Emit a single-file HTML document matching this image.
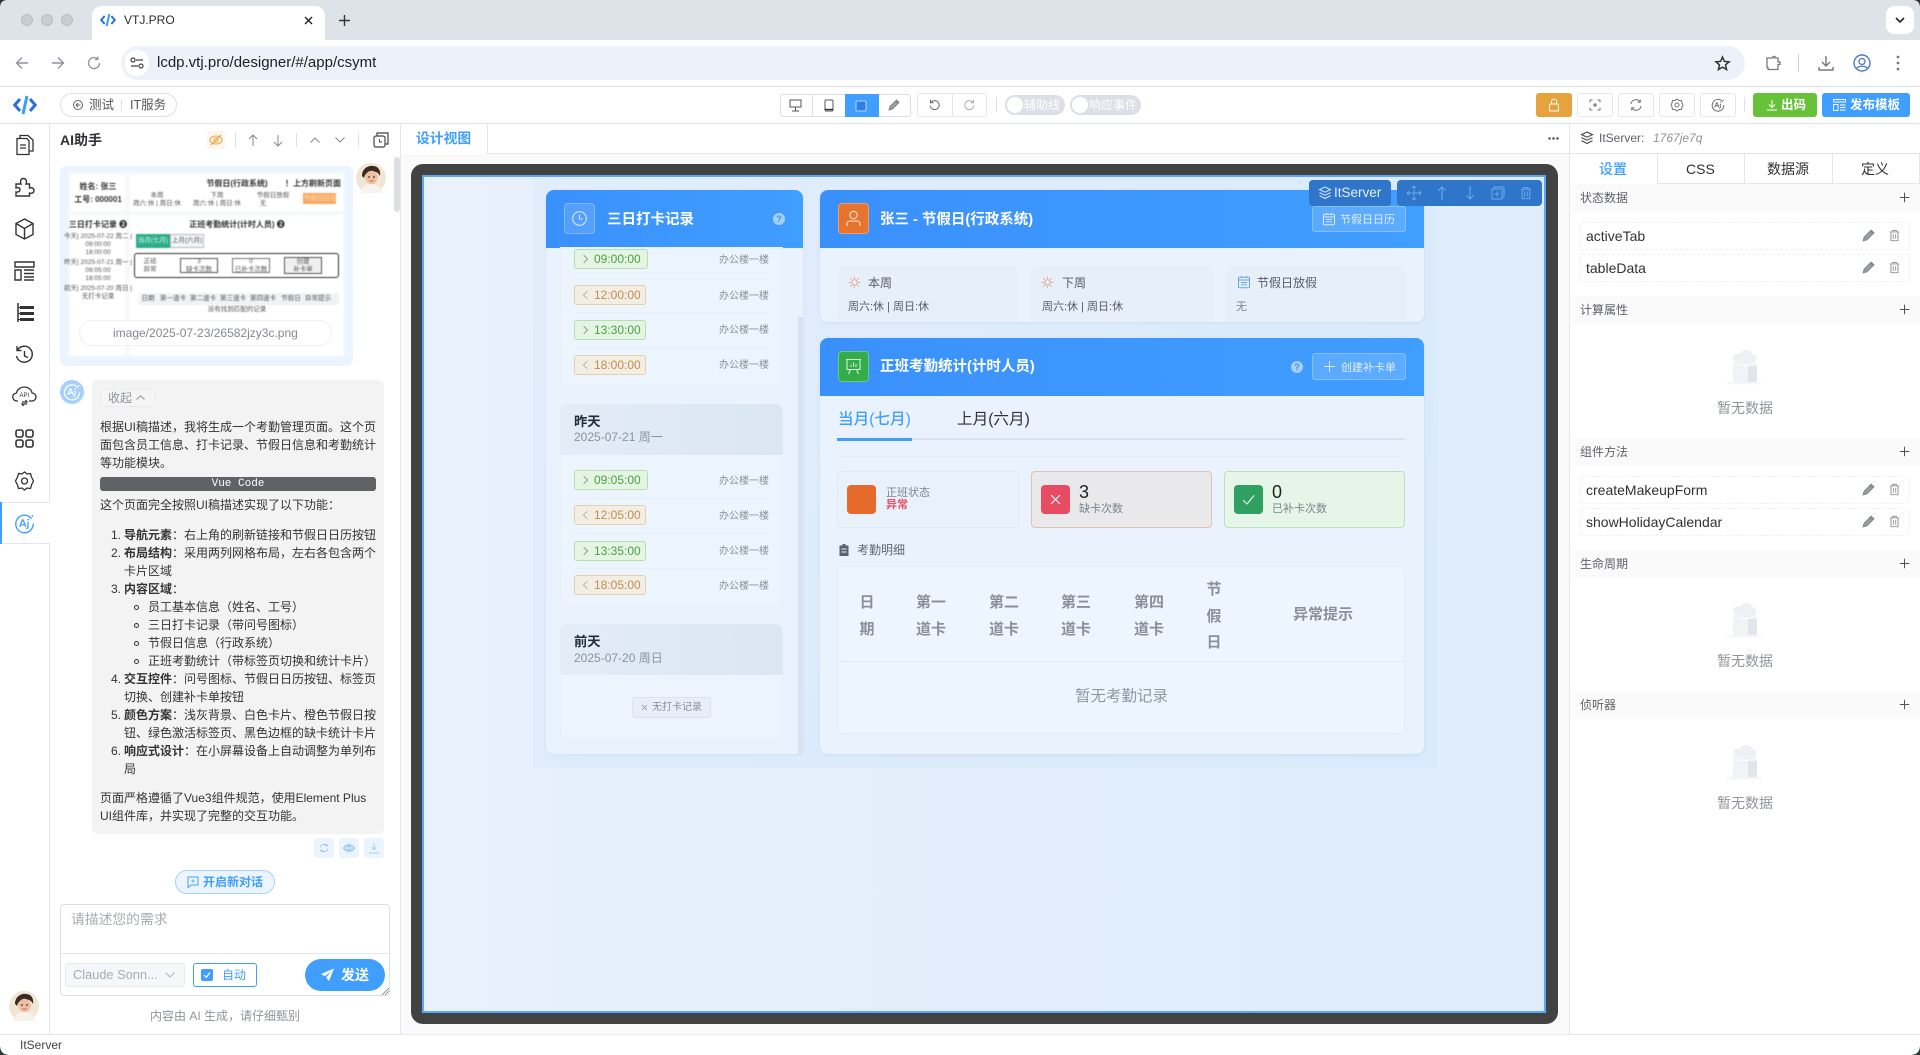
<!DOCTYPE html>
<html lang="zh"><head><meta charset="utf-8"><title>VTJ.PRO</title>
<style>
*{box-sizing:border-box}
html,body{margin:0;padding:0;width:1920px;height:1055px;overflow:hidden;background:#fff;font-family:"Liberation Sans","Noto Sans CJK SC",sans-serif;color:#303133}
.a{position:absolute}
.t{position:absolute;white-space:nowrap}
svg{position:absolute;overflow:visible}
.hdr{position:absolute;height:58px;background:linear-gradient(90deg,#3a90fb,#409eff);border-radius:8px 8px 0 0}
.ib{position:absolute;width:31px;height:31px;border-radius:4px;border:1px solid rgba(255,255,255,.25)}
.ht{position:absolute;white-space:nowrap;color:#fff;font-weight:700;font-size:14.5px;line-height:20px}
.gb{position:absolute;background:#fff;border:1px solid #e4e7ed;border-radius:3px;width:36px;height:24px;top:93px}
.tag{position:absolute;left:574px;height:20px;border-radius:3px;font-size:12px;line-height:18px;padding-left:19px;width:72px}
.tag::before{content:"";position:absolute;left:8px;top:6px;width:5px;height:5px;transform:rotate(45deg)}
.g{background:#e4f5e4;border:1px solid #b5e0ae;color:#4da044}
.g::before{border-top:1px solid #8aa08c;border-right:1px solid #8aa08c;left:6px}
.o{background:#f2eee4;border:1px solid #e5d0ab;color:#c48c50}
.o::before{border-left:1px solid #c9b69a;border-bottom:1px solid #c9b69a;left:9px}
.loc{position:absolute;left:719px;font-size:10px;line-height:14px;color:#87909b;white-space:nowrap;margin-top:2px}
.dv{position:absolute;left:574px;width:195px;height:1px;background:#e5eef9}
.day{position:absolute;left:560px;width:223px;background:#ecf4fe;border:1px solid #e6effa;border-radius:8px}
.dh{position:absolute;left:560px;width:223px;height:51px;background:linear-gradient(90deg,#e3ecf7,#dbe6f3);border-radius:8px 8px 0 0}
.sm{position:absolute;top:266px;height:56px;background:#e7eff9;border:1px solid #e4edf8;border-bottom:0;border-radius:6px 6px 0 0}
.st{position:absolute;top:471px;height:57px;border-radius:4px}
.th{position:absolute;font-size:15px;font-weight:700;color:#8a9099;line-height:26.5px;text-align:center;white-space:nowrap;margin-top:2px}
.sh{position:absolute;left:1573px;width:347px;height:28px;background:#fafafa}
.sl{position:absolute;left:1580px;font-size:12px;line-height:18px;color:#606266;white-space:nowrap}
.it{position:absolute;left:1580px;width:330px;height:28px;border:1px dashed #f0f0f0;border-radius:2px;font-size:14px;line-height:26px;padding-left:5px;color:#303133}
.em{position:absolute;left:1695px;width:100px;text-align:center;font-size:14px;line-height:20px;color:#909399}
.m{position:absolute;white-space:nowrap;transform:translateX(-50%);font-size:6.5px;line-height:8px;color:#555}
.mb{font-weight:700;font-size:8px;line-height:10px;color:#333}
</style></head>
<body>
<svg width="0" height="0" style="position:absolute">
<defs>
<symbol id="pen" viewBox="0 0 14 14"><path d="M2 12 L3 8.5 L9.5 2 L12 4.5 L5.5 11 Z M8.5 3 L11 5.5" fill="#9a9ea5" stroke="#7c7f85" stroke-width=".9"/></symbol>
<symbol id="bin" viewBox="0 0 14 14"><path d="M2 3.2H12M5 3V1.5H9V3M3.2 3.2V12.6H10.8V3.2M5.7 5.5V10.5M8.3 5.5V10.5" fill="none" stroke="#8d9096" stroke-width="1"/></symbol>
<symbol id="plus" viewBox="0 0 14 14"><path d="M7 1V13M1 7H13" fill="none" stroke="#555" stroke-width="1.3"/></symbol>
<symbol id="sun" viewBox="0 0 14 14"><circle cx="7" cy="7" r="3" fill="none" stroke="#e59a85" stroke-width="1"/><path d="M7 .8V2.6M7 11.4V13.2M.8 7H2.6M11.4 7H13.2M2.6 2.6L3.9 3.9M10.1 10.1L11.4 11.4M11.4 2.6L10.1 3.9M3.9 10.1L2.6 11.4" stroke="#e59a85" stroke-width="1"/></symbol>
<symbol id="cal" viewBox="0 0 14 14"><rect x="1.5" y="2.2" width="11" height="10.6" rx="1" fill="none" stroke="currentColor" stroke-width="1"/><path d="M1.5 5H12.5M4.5 1V3M9.5 1V3M4 7.5H10M4 9.8H10" stroke="currentColor" stroke-width=".9" fill="none"/></symbol>
<symbol id="empty" viewBox="0 0 40 40"><ellipse cx="20" cy="36" rx="19" ry="1.6" fill="#f6f6f8"/><path d="M10 14 C7 8 13 5 16 7 C18 1 27 2 28 7 C33 7 34 13 30 16 L20 18Z" fill="#eff0f3"/><path d="M8 17 L16 12 L20 17 L12 20Z" fill="#f3f4f7"/><path d="M33 17 L26 13 L24 18 L33 22Z" fill="#f3f4f7"/><rect x="9" y="19" width="15" height="16" fill="#f2f3f6"/><rect x="24" y="19" width="9" height="16" fill="#e3e5ec"/></symbol>
<symbol id="layers" viewBox="0 0 14 14"><path d="M7 1L12.5 3.6L7 6.2L1.5 3.6ZM1.5 6.6L7 9.2L12.5 6.6M1.5 9.6L7 12.5L12.5 9.6" fill="none" stroke="currentColor" stroke-width="1.1"/></symbol>
<symbol id="rf" viewBox="0 0 14 14"><path d="M2 6A5 5 0 0 1 11 3.8M12 8A5 5 0 0 1 3 10.2M11.3 1.5V4.2H8.6M2.7 12.5V9.8H5.4" fill="none" stroke="currentColor" stroke-width="1"/></symbol>
<symbol id="code" viewBox="0 0 24 20"><path d="M7 4L1.8 10L7 16M17 4L22.2 10L17 16" fill="none" stroke="#2c6fe0" stroke-width="3"/><path d="M14 1L10 19" stroke="#3aa0f5" stroke-width="3"/></symbol>
<symbol id="ai" viewBox="0 0 24 24"><path d="M20 6.5A10 10 0 1 0 22 12" fill="none" stroke="currentColor" stroke-width="1.6"/><path d="M6.5 16L9.5 8H10.5L13.5 16M7.6 13.4H12.4" fill="none" stroke="currentColor" stroke-width="1.5"/><path d="M16 10V15.5Q16 17.5 14 18" fill="none" stroke="currentColor" stroke-width="1.5"/><circle cx="16.2" cy="7.5" r="1" fill="currentColor"/><circle cx="21" cy="3.5" r="1" fill="currentColor"/></symbol>
<symbol id="face" viewBox="0 0 30 30"><circle cx="15" cy="15" r="15" fill="#efe6d3"/><path d="M6 13C6 5 13 2 17 3C23 3 25 9 24 13C22 9 19 8 15 9C11 9 9 11 8 15Z" fill="#3a2a22"/><ellipse cx="15.5" cy="14.5" rx="6.2" ry="6.8" fill="#f0bfa0"/><path d="M5 30C6 22 11 21 15 21C20 21 25 23 26 30Z" fill="#f7f3ea"/><circle cx="13" cy="14" r=".9" fill="#333"/><circle cx="18" cy="14" r=".9" fill="#333"/><path d="M13.5 17.5Q15.5 19 17.5 17.5" stroke="#b55" fill="none" stroke-width=".8"/></symbol>
</defs></svg>

<!-- browser chrome -->
<div class="a" style="left:0;top:0;width:1920px;height:40px;background:#dee3e8"></div>
<div class="a" style="left:0;top:0;width:6px;height:6px;background:radial-gradient(circle at 100% 100%,transparent 5.5px,#333 6px)"></div>
<div class="a" style="left:1914px;top:0;width:6px;height:6px;background:radial-gradient(circle at 0 100%,transparent 5.5px,#333 6px)"></div>
<div class="a" style="left:21px;top:14px;width:12px;height:12px;border-radius:50%;background:#c9cdd1;border:1px solid #b9bdc1"></div>
<div class="a" style="left:41px;top:14px;width:12px;height:12px;border-radius:50%;background:#c9cdd1;border:1px solid #b9bdc1"></div>
<div class="a" style="left:61px;top:14px;width:12px;height:12px;border-radius:50%;background:#c9cdd1;border:1px solid #b9bdc1"></div>
<div class="a" style="left:92px;top:6px;width:233px;height:34px;background:#fff;border-radius:10px 10px 0 0"></div>
<svg style="left:100px;top:13px" width="16" height="14"><use href="#code" width="16" height="14"/></svg>
<div class="t" style="left:124px;top:11px;font-size:12px;line-height:18px;color:#2a2d30">VTJ.PRO</div>
<svg style="left:304px;top:15.5px" width="9" height="9"><path d="M1 1L8 8M8 1L1 8" stroke="#222" stroke-width="1.4"/></svg>
<svg style="left:339px;top:14.5px" width="11" height="11"><path d="M5.5 0V11M0 5.5H11" stroke="#333" stroke-width="1.4"/></svg>
<div class="a" style="left:1886px;top:6px;width:28px;height:28px;border-radius:8px;background:#fff"></div>
<svg style="left:1895px;top:17px" width="10" height="6"><path d="M1 1L5 5L9 1" fill="none" stroke="#222" stroke-width="1.6"/></svg>

<div class="a" style="left:0;top:40px;width:1920px;height:46px;background:#fff"></div>
<svg style="left:15px;top:56px" width="14" height="14"><path d="M13 7H1.5M7 1.5L1.5 7L7 12.5" fill="none" stroke="#8e9399" stroke-width="1.4"/></svg>
<svg style="left:51px;top:56px" width="14" height="14"><path d="M1 7H12.5M7 1.5L12.5 7L7 12.5" fill="none" stroke="#8e9399" stroke-width="1.4"/></svg>
<svg style="left:87px;top:56px" width="14" height="14"><path d="M12.5 7A5.5 5.5 0 1 1 10.5 2.8M10.8 .5V3.5H7.8" fill="none" stroke="#8e9399" stroke-width="1.3"/></svg>
<div class="a" style="left:121px;top:46px;width:1624px;height:34px;border-radius:17px;background:#edf2fa"></div>
<div class="a" style="left:125px;top:50px;width:24px;height:26px;border-radius:13px;background:#fff"></div>
<svg style="left:130px;top:57px" width="14" height="12"><path d="M6 3H13M1 9H8" stroke="#444" stroke-width="1.3"/><circle cx="3" cy="3" r="2" fill="none" stroke="#444" stroke-width="1.2"/><circle cx="11" cy="9" r="2" fill="none" stroke="#444" stroke-width="1.2"/></svg>
<div class="t" style="left:157px;top:53px;font-size:15px;line-height:20px;color:#202124">lcdp.vtj.pro/designer/#/app/csymt</div>
<svg style="left:1715px;top:56px" width="15" height="15"><path d="M7.5 1L9.4 5.4L14 5.8L10.5 8.9L11.6 13.6L7.5 11.1L3.4 13.6L4.5 8.9L1 5.8L5.6 5.4Z" fill="none" stroke="#333" stroke-width="1.5"/></svg>
<svg style="left:1765px;top:55px" width="16" height="16"><path d="M5 3H8V1.5H10V3H13V7H15V9.5H13V14.5H3V12.5H2V3Z" fill="none" stroke="#75797e" stroke-width="1.3"/></svg>
<div class="a" style="left:1798px;top:54px;width:1px;height:18px;background:#cfd3d8"></div>
<svg style="left:1818px;top:55px" width="16" height="16"><path d="M8 1V10.5M4 7L8 11L12 7M1 12V15H15V12" fill="none" stroke="#75797e" stroke-width="1.4"/></svg>
<svg style="left:1853px;top:54px" width="18" height="18"><circle cx="9" cy="9" r="8" fill="none" stroke="#4f7ac4" stroke-width="1.4"/><circle cx="9" cy="7.5" r="3" fill="none" stroke="#4f7ac4" stroke-width="1.3"/><path d="M3.5 14.5C5 11.5 13 11.5 14.5 14.5" fill="none" stroke="#4f7ac4" stroke-width="1.3"/></svg>
<svg style="left:1896px;top:55px" width="4" height="16"><circle cx="2" cy="2" r="1.4" fill="#75797e"/><circle cx="2" cy="8" r="1.4" fill="#75797e"/><circle cx="2" cy="14" r="1.4" fill="#75797e"/></svg>
<div class="a" style="left:0;top:86px;width:1920px;height:1px;background:#dcdfe3"></div>

<!-- app header -->
<svg style="left:13px;top:95px" width="24" height="20"><use href="#code" width="24" height="20"/></svg>
<div class="a" style="left:60px;top:93px;width:117px;height:24px;border:1px solid #dcdfe6;border-radius:12px"></div>
<svg style="left:73px;top:100px" width="10" height="10"><circle cx="5" cy="5" r="4.5" fill="none" stroke="#666"/><path d="M7.5 5H3M5 3L3 5L5 7" fill="none" stroke="#666" stroke-width=".9"/></svg>
<div class="t" style="left:89px;top:95px;font-size:12.5px;line-height:20px;color:#555">测试</div>
<div class="a" style="left:121px;top:99px;width:1px;height:12px;background:#dcdfe6"></div>
<div class="t" style="left:130px;top:95px;font-size:12.5px;line-height:20px;color:#555">IT服务</div>

<div class="a" style="left:780px;top:94px;width:131px;height:23px;border:1px solid #dcdfe6;border-radius:3px;background:#fff"></div>
<div class="a" style="left:812px;top:94px;width:1px;height:23px;background:#dcdfe6"></div>
<div class="a" style="left:845px;top:94px;width:34px;height:23px;background:#409eff"></div>
<svg style="left:789px;top:99px" width="13" height="13"><path d="M1 1H12V8H1ZM6.5 8V11.5M3 12H10" fill="none" stroke="#555" stroke-width="1"/></svg>
<svg style="left:823.5px;top:99px" width="10" height="13"><rect x="1" y="1" width="8" height="11" rx="1" fill="none" stroke="#555"/><path d="M1 10.5H9" stroke="#333" stroke-width="1.4"/></svg>
<svg style="left:855px;top:100px" width="12" height="12"><rect x="1" y="1" width="10" height="10" rx="1" fill="#2f80e6" stroke="#d5e8ff" stroke-width=".8"/></svg>
<svg style="left:887px;top:98px" width="14" height="14"><use href="#pen" width="14" height="14"/></svg>
<div class="a" style="left:917px;top:93px;width:70px;height:24px;border:1px solid #e4e7ed;border-radius:3px;background:#fff"></div>
<div class="a" style="left:952px;top:93px;width:1px;height:24px;background:#e4e7ed"></div>
<svg style="left:929px;top:99px" width="11" height="12"><path d="M2 3.5A4.5 4.5 0 1 1 1.2 6.5M1.5 .8V3.8H4.5" fill="none" stroke="#666"/></svg>
<svg style="left:964px;top:99px" width="11" height="12"><path d="M9 3.5A4.5 4.5 0 1 0 9.8 6.5M9.5 .8V3.8H6.5" fill="none" stroke="#aaa"/></svg>
<div class="a" style="left:996px;top:97px;width:1px;height:15px;background:#dcdfe6"></div>
<div class="a" style="left:1005px;top:95px;width:60px;height:20px;border-radius:10px;background:#dcdfe6"></div>
<div class="a" style="left:1007px;top:97px;width:16px;height:16px;border-radius:50%;background:#fff"></div>
<div class="t" style="left:1024px;top:95px;font-size:12px;line-height:20px;color:#fff">辅助线</div>
<div class="a" style="left:1070px;top:95px;width:71px;height:20px;border-radius:10px;background:#dcdfe6"></div>
<div class="a" style="left:1072px;top:97px;width:16px;height:16px;border-radius:50%;background:#fff"></div>
<div class="t" style="left:1089px;top:95px;font-size:12px;line-height:20px;color:#fff">响应事件</div>

<div class="a" style="left:1536px;top:93px;width:36px;height:24px;background:#e6a23c;border-radius:3px"></div>
<svg style="left:1548px;top:98px" width="12" height="14"><rect x="1.5" y="6" width="9" height="7" rx="1" fill="none" stroke="#fff"/><path d="M3.5 6V3.5A2.5 2.5 0 0 1 8.5 3.5V6" fill="none" stroke="#fff"/></svg>
<div class="gb" style="left:1577px"></div><div class="gb" style="left:1618px"></div><div class="gb" style="left:1659px"></div><div class="gb" style="left:1700px"></div>
<svg style="left:1589px;top:99px" width="12" height="12"><path d="M1 3.5V1H3.5M8.5 1H11V3.5M11 8.5V11H8.5M3.5 11H1V8.5" fill="none" stroke="#777"/><circle cx="6" cy="6" r="1.8" fill="#888"/></svg>
<svg style="left:1629px;top:98px;color:#777" width="14" height="14"><use href="#rf" width="14" height="14"/></svg>
<svg style="left:1670px;top:98px" width="14" height="14"><circle cx="7" cy="7" r="2" fill="none" stroke="#777"/><path d="M7 1L9 2.5L11.5 2.5L12 5L13 7L12 9L11.5 11.5L9 11.5L7 13L5 11.5L2.5 11.5L2 9L1 7L2 5L2.5 2.5L5 2.5Z" fill="none" stroke="#777"/></svg>
<svg style="left:1711px;top:98px;color:#666" width="14" height="14"><use href="#ai" width="14" height="14"/></svg>
<div class="a" style="left:1744px;top:97px;width:1px;height:15px;background:#dcdfe6"></div>
<div class="a" style="left:1753px;top:93px;width:64px;height:24px;background:#67c23a;border-radius:3px"></div>
<svg style="left:1766px;top:99px" width="12" height="12"><path d="M6 1V8M3 5.5L6 8.5L9 5.5M1 11H11" fill="none" stroke="#fff"/></svg>
<div class="t" style="left:1781px;top:95px;font-size:12.5px;font-weight:700;line-height:20px;color:#fff">出码</div>
<div class="a" style="left:1822px;top:93px;width:88px;height:24px;background:#409eff;border-radius:3px"></div>
<svg style="left:1833px;top:99px" width="13" height="12"><path d="M.5 .5H12.5V3H.5ZM.5 5.5H5V11.5H.5ZM7 6H12.5M7 8.5H12.5M7 11H12.5" fill="none" stroke="#fff" stroke-width=".9"/></svg>
<div class="t" style="left:1850px;top:95px;font-size:12.5px;font-weight:700;line-height:20px;color:#fff">发布模板</div>
<div class="a" style="left:0;top:123px;width:1920px;height:1px;background:#dfe2e6"></div>

<!-- left rail -->
<div class="a" style="left:49px;top:124px;width:1px;height:910px;background:#e4e7ed"></div>
<svg style="left:15px;top:134px" width="20" height="22"><path d="M5 4V1.5H13L18 6V17H14M2 4.5H12L14 7V20.5H2ZM5 11H11M5 14H11" fill="none" stroke="#333" stroke-width="1.3"/></svg>
<svg style="left:14px;top:176px" width="21" height="22"><path d="M2 8H7C6 6 6.5 2.5 9.5 2.5S13 6 12 8H15.5V12C18 11 20 12.5 20 14.5S18 18 15.5 17V20H2V16C4.5 16.5 6 15 6 13.5S4.5 11 2 12Z" fill="none" stroke="#333" stroke-width="1.4"/></svg>
<svg style="left:15px;top:218px" width="19" height="22"><path d="M9.5 1L18 5.5V16.5L9.5 21L1 16.5V5.5ZM1 5.5L9.5 10.5L18 5.5M9.5 10.5V21" fill="none" stroke="#333" stroke-width="1.4"/></svg>
<svg style="left:14px;top:261px" width="21" height="20"><path d="M1 1H20V6H1ZM1 9H7V19H1ZM10 9H20M10 12.5H20M10 16H20M10 19H20" fill="none" stroke="#333" stroke-width="1.4"/></svg>
<svg style="left:16px;top:303px" width="18" height="20"><path d="M2 0V19" stroke="#333" stroke-width="1.5"/><rect x="4" y="3" width="14" height="3" fill="#333"/><rect x="4" y="9" width="14" height="3" fill="#333"/><rect x="4" y="15" width="14" height="3" fill="#333"/><path d="M2 4.5H4M2 10.5H4M2 16.5H4" stroke="#333"/></svg>
<svg style="left:15px;top:345px" width="19" height="20"><path d="M2.5 5A8 8 0 1 1 1.5 11M2 1V5.5H6.5M9.5 6V11L13 12.5" fill="none" stroke="#333" stroke-width="1.4"/></svg>
<svg style="left:12px;top:386px" width="25" height="22"><path d="M6 15H5A4 4 0 0 1 4.5 7C5.5 2.5 9.5 1 12.5 1S19.5 3 20 7A4 4 0 0 1 20 15H17M10 16H15L13.5 14M15 18H10L11.5 20" fill="none" stroke="#333" stroke-width="1.3"/><text x="7.5" y="11" font-size="6" fill="#333" font-family="Liberation Sans">API</text></svg>
<svg style="left:15px;top:429px" width="19" height="19"><rect x="1" y="1" width="7" height="7" rx="2" fill="none" stroke="#333" stroke-width="1.6"/><rect x="11" y="1" width="7" height="7" rx="2" fill="none" stroke="#333" stroke-width="1.6"/><rect x="1" y="11" width="7" height="7" rx="2" fill="none" stroke="#333" stroke-width="1.6"/><rect x="11" y="11" width="7" height="7" rx="2" fill="none" stroke="#333" stroke-width="1.6"/></svg>
<svg style="left:15px;top:471px" width="19" height="20"><circle cx="9.5" cy="10" r="3" fill="none" stroke="#333" stroke-width="1.3"/><path d="M9.5 1L12 3L15.5 2.5L16.5 6L18.5 10L16.5 14L15.5 17.5L12 17L9.5 19L7 17L3.5 17.5L2.5 14L.5 10L2.5 6L3.5 2.5L7 3Z" fill="none" stroke="#333" stroke-width="1.3"/></svg>
<div class="a" style="left:0;top:502px;width:50px;height:42px;background:#fff;border-top:1px solid #e4e7ed;border-bottom:1px solid #e4e7ed"></div>
<div class="a" style="left:0;top:502px;width:2px;height:42px;background:#409eff"></div>
<svg style="left:14px;top:513px;color:#409eff" width="21" height="21"><use href="#ai" width="21" height="21"/></svg>
<svg style="left:9px;top:991px" width="30" height="30"><use href="#face" width="30" height="30"/></svg>

<!-- AI panel -->
<div class="a" style="left:400px;top:124px;width:1px;height:910px;background:#e4e7ed"></div>
<div class="t" style="left:60px;top:130px;font-size:14px;font-weight:700;line-height:20px;color:#303133">AI助手</div>
<div class="a" style="left:207px;top:131px;width:18px;height:18px;background:#fdf6ec;border-radius:2px"></div>
<svg style="left:209px;top:134px" width="14" height="12"><ellipse cx="7" cy="6" rx="6" ry="4" fill="none" stroke="#e6a23c"/><circle cx="7" cy="6" r="2" fill="none" stroke="#e6a23c"/><path d="M2 11L12 1" stroke="#e6a23c"/></svg>
<div class="a" style="left:235px;top:133px;width:1px;height:14px;background:#dcdfe6"></div>
<svg style="left:248px;top:134px" width="10" height="12"><path d="M5 12V1M1 5L5 1L9 5" fill="none" stroke="#888"/></svg>
<svg style="left:273px;top:135px" width="10" height="12"><path d="M5 0V11M1 7L5 11L9 7" fill="none" stroke="#888"/></svg>
<div class="a" style="left:296px;top:133px;width:1px;height:14px;background:#dcdfe6"></div>
<svg style="left:310px;top:137px" width="10" height="6"><path d="M.5 5.5L5 1L9.5 5.5" fill="none" stroke="#888"/></svg>
<svg style="left:335px;top:137px" width="10" height="6"><path d="M.5 .5L5 5L9.5 .5" fill="none" stroke="#888"/></svg>
<div class="a" style="left:358px;top:133px;width:1px;height:14px;background:#dcdfe6"></div>
<svg style="left:373px;top:132px" width="16" height="16"><path d="M4 4V1H15V12H12" fill="none" stroke="#444" stroke-width="1.2"/><rect x="1" y="4" width="11" height="11" rx="2" fill="#fff" stroke="#444" stroke-width="1.2"/><path d="M6.5 7V10H9" fill="none" stroke="#444"/></svg>
<div class="a" style="left:394px;top:157px;width:6px;height:55px;background:#dedfe2;border-radius:3px"></div>

<div class="a" style="left:60px;top:166px;width:293px;height:200px;background:#ecf5ff;border-radius:6px"></div>
<div class="a" style="left:0;top:0;width:400px;height:360px;filter:blur(.45px)">
<div class="a" style="left:68px;top:172px;width:277px;height:185px;background:#f7f8fa"></div>
<div class="a" style="left:70px;top:175px;width:55px;height:36px;background:#fff"></div>
<div class="a" style="left:130px;top:175px;width:213px;height:36px;background:#fff"></div>
<div class="a" style="left:70px;top:215px;width:55px;height:140px;background:#fff"></div>
<div class="a" style="left:130px;top:215px;width:213px;height:140px;background:#fff"></div>
<div class="m mb" style="left:98px;top:182px">姓名: 张三</div>
<div class="m mb" style="left:98px;top:195px">工号: 000001</div>
<div class="m mb" style="left:237px;top:179px">节假日(行政系统)</div>
<div class="m mb" style="left:313px;top:179px">！上方刷新页面</div>
<div class="m" style="left:157px;top:192px">本周</div><div class="m" style="left:157px;top:200px">周六:休 | 周日:休</div>
<div class="m" style="left:217px;top:192px">下周</div><div class="m" style="left:217px;top:200px">周六:休 | 周日:休</div>
<div class="m" style="left:273px;top:192px">节假日放假</div><div class="m" style="left:263px;top:200px">无</div>
<div class="a" style="left:303px;top:193px;width:33px;height:11px;background:#f9a85f"></div>
<div class="m" style="left:320px;top:195px;color:#ffe2c2">节假日日历</div>
<div class="m mb" style="left:98px;top:220px">三日打卡记录 ❷</div>
<div class="m" style="left:98px;top:233px">今天| 2025-07-22 周二 |</div><div class="m" style="left:98px;top:241px">09:00:00</div><div class="m" style="left:98px;top:249px">18:00:00</div>
<div class="m" style="left:98px;top:259px">昨天| 2025-07-21 周一 |</div><div class="m" style="left:98px;top:267px">09:05:00</div><div class="m" style="left:98px;top:275px">18:05:00</div>
<div class="m" style="left:98px;top:285px">前天| 2025-07-20 周日 |</div><div class="m" style="left:98px;top:293px">无打卡记录</div>
<div class="m mb" style="left:237px;top:220px">正班考勤统计(计时人员) ❷</div>
<div class="a" style="left:136px;top:234px;width:34px;height:14px;background:#30ad87"></div>
<div class="a" style="left:170px;top:234px;width:34px;height:14px;border:1px solid #bbb;background:#f2f5f8"></div>
<div class="m" style="left:153px;top:237px;color:#cff">当月(七月)</div><div class="m" style="left:187px;top:237px">上月(六月)</div>
<div class="a" style="left:134px;top:253px;width:205px;height:25px;border:1px solid #333;border-radius:3px"></div>
<div class="m" style="left:150px;top:258px">正班</div><div class="m" style="left:150px;top:266px">异常</div>
<div class="a" style="left:180px;top:258px;width:38px;height:15px;border:1px solid #555"></div><div class="m" style="left:199px;top:258px">3</div><div class="m" style="left:199px;top:266px">缺卡次数</div>
<div class="a" style="left:232px;top:258px;width:38px;height:15px;border:1px solid #777"></div><div class="m" style="left:251px;top:258px">0</div><div class="m" style="left:251px;top:266px">已补卡次数</div>
<div class="a" style="left:284px;top:257px;width:38px;height:17px;border:1px solid #555;background:#f0f0f0"></div><div class="m" style="left:303px;top:258px">创建</div><div class="m" style="left:303px;top:266px">补卡单</div>
<div class="a" style="left:139px;top:293px;width:200px;height:12px;background:#f1f2f4"></div>
<div class="m" style="left:148px;top:295px">日期</div><div class="m" style="left:173px;top:295px">第一道卡</div><div class="m" style="left:203px;top:295px">第二道卡</div><div class="m" style="left:233px;top:295px">第三道卡</div><div class="m" style="left:263px;top:295px">第四道卡</div><div class="m" style="left:291px;top:295px">节假日</div><div class="m" style="left:318px;top:295px">异常提示</div>
<div class="m" style="left:237px;top:306px">没有找到匹配的记录</div>
</div>
<div class="a" style="left:79px;top:320px;width:253px;height:26px;background:rgba(255,255,255,.9);border:1px solid #eef0f4;border-radius:13px"></div>
<div class="t" style="left:113px;top:324px;font-size:12px;line-height:18px;color:#858890">image/2025-07-23/26582jzy3c.png</div>
<svg style="left:356px;top:163px" width="30" height="30"><use href="#face" width="30" height="30"/></svg>

<svg style="left:60px;top:380px;color:#fff" width="24" height="24"><circle cx="12" cy="12" r="12" fill="#a5d0f8"/><use href="#ai" x="3" y="3" width="18" height="18"/></svg>
<div class="a" style="left:92px;top:380px;width:292px;height:454px;background:#f3f3f4;border-radius:6px"></div>
<div class="a" style="left:100px;top:389px;width:55px;height:18px;border:1px solid #ebecef;border-radius:3px;background:#f5f5f6"></div>
<div class="t" style="left:108px;top:389px;font-size:12px;line-height:18px;color:#8f9297">收起</div>
<svg style="left:136px;top:395px" width="9" height="5"><path d="M.5 4.5L4.5 .8L8.5 4.5" fill="none" stroke="#8f9297"/></svg>
<div class="t" style="left:100px;top:418px;font-size:12px;line-height:18px;color:#333">根据UI稿描述，我将生成一个考勤管理页面。这个页<br>面包含员工信息、打卡记录、节假日信息和考勤统计<br>等功能模块。</div>
<div class="a" style="left:100px;top:477px;width:276px;height:14px;background:#616266;border-radius:3px;color:#fff;font:11px/14px 'Liberation Mono',monospace;text-align:center">Vue Code</div>
<div class="t" style="left:100px;top:496px;font-size:12px;line-height:18px;color:#333">这个页面完全按照UI稿描述实现了以下功能：</div>
<div class="t" style="left:111px;top:526px;font-size:12px;line-height:18px;color:#333">1.<br>2.<br><br>3.<br><br><br><br><br>4.<br><br>5.<br><br>6.</div>
<div class="t" style="left:124px;top:526px;font-size:12px;line-height:18px;color:#333"><b>导航元素</b>：右上角的刷新链接和节假日日历按钮<br><b>布局结构</b>：采用两列网格布局，左右各包含两个<br>卡片区域<br><b>内容区域</b>：<br>&nbsp;<br>&nbsp;<br>&nbsp;<br>&nbsp;<br><b>交互控件</b>：问号图标、节假日日历按钮、标签页<br>切换、创建补卡单按钮<br><b>颜色方案</b>：浅灰背景、白色卡片、橙色节假日按<br>钮、绿色激活标签页、黑色边框的缺卡统计卡片<br><b>响应式设计</b>：在小屏幕设备上自动调整为单列布<br>局</div>
<div class="t" style="left:148px;top:598px;font-size:12px;line-height:18px;color:#333">员工基本信息（姓名、工号）<br>三日打卡记录（带问号图标）<br>节假日信息（行政系统）<br>正班考勤统计（带标签页切换和统计卡片）</div>
<div class="a" style="left:134px;top:605px;width:5px;height:5px;border:1px solid #333;border-radius:50%"></div>
<div class="a" style="left:134px;top:623px;width:5px;height:5px;border:1px solid #333;border-radius:50%"></div>
<div class="a" style="left:134px;top:641px;width:5px;height:5px;border:1px solid #333;border-radius:50%"></div>
<div class="a" style="left:134px;top:659px;width:5px;height:5px;border:1px solid #333;border-radius:50%"></div>
<div class="t" style="left:100px;top:789px;font-size:12px;line-height:18px;color:#333">页面严格遵循了Vue3组件规范，使用Element Plus<br>UI组件库，并实现了完整的交互功能。</div>
<div class="a" style="left:314px;top:838px;width:20px;height:20px;background:#ecf5ff;border-radius:3px"></div>
<div class="a" style="left:339px;top:838px;width:20px;height:20px;background:#ecf5ff;border-radius:3px"></div>
<div class="a" style="left:364px;top:838px;width:20px;height:20px;background:#ecf5ff;border-radius:3px"></div>
<svg style="left:319px;top:843px;color:#7fb8f2" width="10" height="10"><use href="#rf" width="10" height="10"/></svg>
<svg style="left:343px;top:844px" width="12" height="8"><path d="M.5 4Q6-2.5 11.5 4Q6 10.5 .5 4Z" fill="none" stroke="#7fb8f2"/><circle cx="6" cy="4" r="1.8" fill="none" stroke="#7fb8f2"/></svg>
<svg style="left:369px;top:843px" width="10" height="11"><path d="M5 0V6M2.5 4L5 6.5L7.5 4M0 10H10" fill="none" stroke="#a8cff5"/></svg>
<div class="a" style="left:175px;top:870px;width:100px;height:24px;border:1px solid #a9d2fb;border-radius:12px;background:#ecf5ff"></div>
<svg style="left:187px;top:876px" width="12" height="12"><path d="M1 1H11V9H4L1 11.5Z" fill="none" stroke="#409eff"/><path d="M6 3.2V6.8M4.2 5H7.8" stroke="#409eff" stroke-width=".8"/></svg>
<div class="t" style="left:203px;top:873px;font-size:12px;font-weight:700;line-height:18px;color:#409eff">开启新对话</div>
<div class="a" style="left:60px;top:904px;width:330px;height:92px;background:#fff;border:1px solid #dcdfe6;border-radius:4px"></div>
<div class="a" style="left:61px;top:953px;width:328px;height:1px;background:#e4e7ed"></div>
<div class="t" style="left:71px;top:910px;font-size:13.8px;line-height:20px;color:#a8abb2">请描述您的需求</div>
<div class="a" style="left:65px;top:963px;width:120px;height:24px;background:#f5f7fa;border:1px solid #e9ebf0;border-radius:3px"></div>
<div class="t" style="left:73px;top:965px;font-size:12.8px;line-height:20px;color:#a8abb2">Claude Sonn...</div>
<svg style="left:165px;top:972px" width="10" height="6"><path d="M.5 .5L5 5L9.5 .5" fill="none" stroke="#b2b5bb"/></svg>
<div class="a" style="left:193px;top:963px;width:64px;height:24px;border:1px solid #409eff;border-radius:3px;background:#fff"></div>
<div class="a" style="left:201px;top:969px;width:12px;height:12px;background:#409eff;border-radius:2px"></div>
<svg style="left:203px;top:971px" width="8" height="8"><path d="M1 4L3.3 6.3L7 1.5" fill="none" stroke="#fff" stroke-width="1.2"/></svg>
<div class="t" style="left:222px;top:965px;font-size:12px;line-height:20px;color:#409eff">自动</div>
<div class="a" style="left:305px;top:959px;width:80px;height:32px;background:#409eff;border-radius:16px"></div>
<svg style="left:321px;top:968px" width="13" height="13"><path d="M13 .5L0 6L3.8 8.3L10 3.5L5.2 9.5L8 13Z" fill="#fff"/></svg>
<div class="t" style="left:341px;top:965px;font-size:14px;font-weight:700;line-height:20px;color:#fff">发送</div>
<svg style="left:381px;top:987px" width="9" height="9"><path d="M1 8L8 1M4 8L8 4" stroke="#777" stroke-width=".8"/></svg>
<div class="t" style="left:150px;top:1007px;font-size:12px;line-height:18px;color:#909399">内容由 AI 生成，请仔细甄别</div>

<!-- center -->
<div class="a" style="left:401px;top:124px;width:1168px;height:30px;background:#fff;border-bottom:1px solid #e4e7ed"></div>
<div class="a" style="left:401px;top:124px;width:87px;height:30px;background:#fff;border-right:1px solid #e4e7ed"></div>
<div class="t" style="left:416px;top:129px;font-size:13.8px;font-weight:700;line-height:20px;color:#409eff">设计视图</div>
<svg style="left:1548px;top:137px" width="11" height="3"><circle cx="1.5" cy="1.5" r="1.2" fill="#444"/><circle cx="5.5" cy="1.5" r="1.2" fill="#444"/><circle cx="9.5" cy="1.5" r="1.2" fill="#444"/></svg>
<div class="a" style="left:401px;top:154px;width:1168px;height:880px;background:#fafafa"></div>
<div class="a" style="left:411px;top:164px;width:1147px;height:860px;background:#424242;border-radius:12px"></div>
<div class="a" style="left:422px;top:175px;width:1124px;height:838px;background:linear-gradient(90deg,#e8f1fc,#e2eefb 50%,#dfedfb);border:2px solid #5aa7f5"></div>
<div class="a" style="left:533px;top:178px;width:905px;height:590px;background:linear-gradient(135deg,#e1edfb,#d8eafb)"></div>

<!-- left card -->
<div class="a" style="left:546px;top:190px;width:257px;height:564px;background:#eaf3fd;border-radius:8px;box-shadow:0 1px 3px rgba(60,110,170,.08)"></div>
<div class="a" style="left:798px;top:317px;width:5px;height:437px;background:#d7e3f1"></div>
<div class="hdr" style="left:546px;top:190px;width:257px"></div>
<div class="ib" style="left:564px;top:203px;background:rgba(255,255,255,.13)"></div>
<svg style="left:572px;top:211px" width="15" height="15"><circle cx="7.5" cy="7.5" r="6.8" fill="none" stroke="#cfe5ff" stroke-width="1.1"/><path d="M7.5 3.5V8H11" fill="none" stroke="#cfe5ff" stroke-width="1.1"/></svg>
<div class="ht" style="left:607px;top:210px">三日打卡记录</div>
<div class="a" style="left:773px;top:213px;width:12px;height:12px;border-radius:50%;background:#a3d0fd;color:#3f8fe8;font-size:9px;font-weight:700;line-height:12px;text-align:center">?</div>

<div class="a" style="left:560px;top:247px;width:223px;height:138px;background:#ecf4fe;border:1px solid #e6effa;border-top:0;border-radius:0 0 8px 8px"></div>
<div class="dv" style="top:278px"></div><div class="dv" style="top:312px"></div><div class="dv" style="top:347px"></div>
<div class="tag g" style="top:249px;width:74px">09:00:00</div>
<div class="tag o" style="top:285px">12:00:00</div>
<div class="tag g" style="top:320px">13:30:00</div>
<div class="tag o" style="top:355px">18:00:00</div>
<div class="loc" style="top:252px">办公楼一楼</div><div class="loc" style="top:288px">办公楼一楼</div><div class="loc" style="top:322px">办公楼一楼</div><div class="loc" style="top:357px">办公楼一楼</div>

<div class="day" style="top:404px;height:201px"></div><div class="dh" style="top:404px"></div>
<div class="t" style="left:574px;top:413px;font-size:13.3px;font-weight:700;line-height:18px;color:#212d3a">昨天</div>
<div class="t" style="left:574px;top:429px;font-size:12px;line-height:16px;color:#8a929c">2025-07-21 周一</div>
<div class="dv" style="top:498px"></div><div class="dv" style="top:533px"></div><div class="dv" style="top:568px"></div>
<div class="tag g" style="top:470px;width:74px">09:05:00</div>
<div class="tag o" style="top:505px">12:05:00</div>
<div class="tag g" style="top:541px">13:35:00</div>
<div class="tag o" style="top:575px">18:05:00</div>
<div class="loc" style="top:473px">办公楼一楼</div><div class="loc" style="top:508px">办公楼一楼</div><div class="loc" style="top:543px">办公楼一楼</div><div class="loc" style="top:578px">办公楼一楼</div>

<div class="day" style="top:624px;height:116px"></div><div class="dh" style="top:624px"></div>
<div class="t" style="left:574px;top:633px;font-size:13.3px;font-weight:700;line-height:18px;color:#212d3a">前天</div>
<div class="t" style="left:574px;top:650px;font-size:12px;line-height:16px;color:#8a929c">2025-07-20 周日</div>
<div class="a" style="left:632px;top:697px;width:79px;height:21px;background:#e7eef8;border:1.5px solid #d9e3ef;border-radius:3px"></div>
<svg style="left:641px;top:704px" width="7" height="7"><path d="M1 1L6 6M6 1L1 6" stroke="#909aa6" stroke-width=".8"/></svg>
<div class="t" style="left:652px;top:701px;font-size:10px;line-height:14px;color:#87909b">无打卡记录</div>

<!-- right top card -->
<div class="a" style="left:820px;top:190px;width:604px;height:132px;background:#eaf3fd;border-radius:8px;box-shadow:0 1px 3px rgba(60,110,170,.1)"></div>
<div class="hdr" style="left:820px;top:190px;width:604px"></div>
<div class="ib" style="left:838px;top:203px;background:#e6732e;border-color:rgba(255,255,255,.3)"></div>
<svg style="left:846px;top:210px" width="15" height="17"><circle cx="7.5" cy="5" r="3.7" fill="none" stroke="#ffe5d3" stroke-width="1.1"/><path d="M1 16V13.5Q1 11.5 4 11H11Q14 11.5 14 13.5V16" fill="none" stroke="#ffe5d3" stroke-width="1.1"/></svg>
<div class="ht" style="left:880px;top:210px">张三 - 节假日(行政系统)</div>
<div class="a" style="left:1312px;top:206px;width:94px;height:26px;background:rgba(255,255,255,.15);border:1px solid rgba(255,255,255,.25);border-radius:3px"></div>
<svg style="left:1322px;top:212px;color:#d8ebff" width="14" height="14"><use href="#cal" width="14" height="14"/></svg>
<div class="t" style="left:1340px;top:211px;font-size:11px;line-height:18px;color:#e0efff">节假日日历</div>
<div class="sm" style="left:838px;width:180px"></div>
<div class="sm" style="left:1031px;width:181px"></div>
<div class="sm" style="left:1226px;width:180px"></div>
<svg style="left:848px;top:276px" width="13" height="13"><use href="#sun" width="13" height="13"/></svg>
<div class="t" style="left:868px;top:274px;font-size:12px;line-height:18px;color:#555c66">本周</div>
<div class="t" style="left:848px;top:299px;font-size:11px;line-height:16px;color:#555c66">周六:休 | 周日:休</div>
<svg style="left:1041px;top:276px" width="13" height="13"><use href="#sun" width="13" height="13"/></svg>
<div class="t" style="left:1062px;top:274px;font-size:12px;line-height:18px;color:#555c66">下周</div>
<div class="t" style="left:1042px;top:299px;font-size:11px;line-height:16px;color:#555c66">周六:休 | 周日:休</div>
<svg style="left:1237px;top:275px;color:#62a6f0" width="14" height="14"><use href="#cal" width="14" height="14"/></svg>
<div class="t" style="left:1257px;top:274px;font-size:12px;line-height:18px;color:#555c66">节假日放假</div>
<div class="t" style="left:1236px;top:299px;font-size:11px;line-height:16px;color:#7a828d">无</div>

<!-- right bottom card -->
<div class="a" style="left:820px;top:338px;width:604px;height:416px;background:#eaf3fd;border-radius:8px;box-shadow:0 1px 3px rgba(60,110,170,.1)"></div>
<div class="hdr" style="left:820px;top:338px;width:604px"></div>
<div class="ib" style="left:838px;top:351px;background:#33ad49;border-color:rgba(255,255,255,.3)"></div>
<svg style="left:845px;top:358px" width="17" height="17"><path d="M1 1.5H16M2 1.5V11.5H15V1.5M5.5 11.5L3.5 16M11.5 11.5L13.5 16" fill="none" stroke="#dff5e2" stroke-width="1"/><path d="M6 9V7M8.5 9V4.5M11 9V6" stroke="#dff5e2" stroke-width="1"/></svg>
<div class="ht" style="left:880px;top:357px">正班考勤统计(计时人员)</div>
<div class="a" style="left:1291px;top:361px;width:12px;height:12px;border-radius:50%;background:#a3d0fd;color:#3f8fe8;font-size:9px;font-weight:700;line-height:12px;text-align:center">?</div>
<div class="a" style="left:1312px;top:353px;width:94px;height:27px;background:rgba(255,255,255,.15);border:1px solid rgba(255,255,255,.25);border-radius:3px"></div>
<svg style="left:1324px;top:361px" width="11" height="11"><path d="M5.5 0V11M0 5.5H11" stroke="#d8ebff" stroke-width="1"/></svg>
<div class="t" style="left:1341px;top:359px;font-size:11px;line-height:18px;color:#e0efff">创建补卡单</div>
<div class="t" style="left:838px;top:409px;font-size:15.6px;line-height:22px;font-weight:500;color:#409eff">当月(七月)</div>
<div class="t" style="left:957px;top:409px;font-size:15.6px;line-height:22px;color:#303133">上月(六月)</div>
<div class="a" style="left:837px;top:438px;width:568px;height:2px;background:#d9e3ef"></div>
<div class="a" style="left:837px;top:438px;width:75px;height:2.5px;background:#409eff"></div>
<div class="a" style="left:837px;top:456px;width:568px;height:1px;background:#e2ecf7"></div>
<div class="st" style="left:837px;width:182px;background:#e9f1fa;border:1px solid #e0eaf6"></div>
<div class="a" style="left:847px;top:485px;width:29px;height:29px;background:#e66a2c;border-radius:4px"></div>
<div class="t" style="left:886px;top:486px;font-size:11px;line-height:14px;color:#7d8590">正班状态</div>
<div class="t" style="left:886px;top:498px;font-size:11px;font-weight:700;line-height:14px;color:#e8516a">异常</div>
<div class="st" style="left:1031px;width:181px;background:#e9e9eb;border:1px solid #dcc3b5"></div>
<div class="a" style="left:1041px;top:485px;width:29px;height:29px;background:#e84c62;border-radius:4px"></div>
<svg style="left:1050px;top:494px" width="11" height="11"><path d="M1 1L10 10M10 1L1 10" stroke="#fff" stroke-width="1"/></svg>
<div class="t" style="left:1079px;top:481px;font-size:18px;line-height:22px;color:#222">3</div>
<div class="t" style="left:1079px;top:501px;font-size:11px;line-height:16px;color:#7d8590">缺卡次数</div>
<div class="st" style="left:1224px;width:181px;background:#e5f5e8;border:1px solid #b8e3b9"></div>
<div class="a" style="left:1234px;top:485px;width:29px;height:29px;background:#2fa060;border-radius:4px"></div>
<svg style="left:1242px;top:494px" width="13" height="11"><path d="M1 6L5 10L12 1.5" fill="none" stroke="#fff" stroke-width="1"/></svg>
<div class="t" style="left:1272px;top:481px;font-size:18px;line-height:22px;color:#222">0</div>
<div class="t" style="left:1272px;top:501px;font-size:11px;line-height:16px;color:#7d8590">已补卡次数</div>
<svg style="left:839px;top:544px" width="10" height="12"><path d="M3.5 0H6.5V1.5H9.5V12H.5V1.5H3.5Z" fill="#5a6470"/><path d="M2.5 5H7.5M2.5 8H7.5" stroke="#eaf3fd"/></svg>
<div class="t" style="left:857px;top:541px;font-size:12px;line-height:18px;color:#5e6670">考勤明细</div>
<div class="a" style="left:837px;top:566px;width:568px;height:168px;background:#edf5fe;border:1px solid #e3ecf6;border-radius:4px"></div>
<div class="a" style="left:838px;top:661px;width:566px;height:1px;background:#dfe9f4"></div>
<div class="th" style="left:847px;width:40px;top:588px">日<br>期</div>
<div class="th" style="left:901px;width:60px;top:588px">第一<br>道卡</div>
<div class="th" style="left:974px;width:60px;top:588px">第二<br>道卡</div>
<div class="th" style="left:1046px;width:60px;top:588px">第三<br>道卡</div>
<div class="th" style="left:1119px;width:60px;top:588px">第四<br>道卡</div>
<div class="th" style="left:1194px;width:40px;top:575px">节<br>假<br>日</div>
<div class="th" style="left:1273px;width:100px;top:600px">异常提示</div>
<div class="t" style="left:1075px;top:687px;font-size:15.5px;line-height:20px;color:#8f98a3">暂无考勤记录</div>

<!-- selection toolbar -->
<div class="a" style="left:1309px;top:180px;width:82px;height:26px;background:#2f75c9;border-radius:4px"></div>
<svg style="left:1318px;top:186px;color:#cfe4ff" width="14" height="14"><use href="#layers" width="14" height="14"/></svg>
<div class="t" style="left:1334px;top:183px;font-size:13.5px;line-height:20px;color:#e2f0ff">ItServer</div>
<div class="a" style="left:1397px;top:180px;width:145px;height:26px;background:#2f75c9;border-radius:4px"></div>
<svg style="left:1407px;top:186px" width="14" height="14"><path d="M7 0V14M0 7H14M7 0L5 2M7 0L9 2M7 14L5 12M7 14L9 12M0 7L2 5M0 7L2 9M14 7L12 5M14 7L12 9" fill="none" stroke="#6ea9ee" stroke-width=".9"/></svg>
<svg style="left:1437px;top:186px" width="10" height="14"><path d="M5 14V1M1.5 4.5L5 1L8.5 4.5" fill="none" stroke="#6ea9ee" stroke-width="1.1"/></svg>
<svg style="left:1465px;top:186px" width="10" height="14"><path d="M5 0V13M1.5 9.5L5 13L8.5 9.5" fill="none" stroke="#6ea9ee" stroke-width="1.1"/></svg>
<svg style="left:1491px;top:186px" width="14" height="14"><path d="M3 3V1H13V11H11M1 3H11V13H1ZM6 5.5V10.5M3.5 8H8.5" fill="none" stroke="#6ea9ee" stroke-width="1"/></svg>
<svg style="left:1519px;top:186px;color:#6ea9ee" width="14" height="14"><path d="M2 3.2H12M5 3V1.5H9V3M3.2 3.2V12.6H10.8V3.2M5.7 5.5V10.5M8.3 5.5V10.5" fill="none" stroke="#6ea9ee" stroke-width="1"/></svg>

<!-- right panel -->
<div class="a" style="left:1569px;top:124px;width:1px;height:910px;background:#e4e7ed"></div>
<svg style="left:1580px;top:131px;color:#444" width="14" height="14"><use href="#layers" width="14" height="14"/></svg>
<div class="t" style="left:1599px;top:129px;font-size:12px;line-height:18px;color:#606266">ItServer:</div>
<div class="t" style="left:1653px;top:129px;font-size:12px;font-style:italic;line-height:18px;color:#909399">1767je7q</div>
<div class="a" style="left:1570px;top:153px;width:350px;height:1px;background:#e4e7ed"></div>
<div class="a" style="left:1657px;top:183px;width:263px;height:1px;background:#e4e7ed"></div>
<div class="a" style="left:1657px;top:154px;width:1px;height:30px;background:#e4e7ed"></div>
<div class="a" style="left:1744px;top:154px;width:1px;height:30px;background:#e4e7ed"></div>
<div class="a" style="left:1832px;top:154px;width:1px;height:30px;background:#e4e7ed"></div>
<div class="a" style="left:1919px;top:154px;width:1px;height:30px;background:#e4e7ed"></div>
<div class="t" style="left:1599px;top:159px;font-size:14px;font-weight:500;line-height:20px;color:#409eff">设置</div>
<div class="t" style="left:1686px;top:159px;font-size:14px;line-height:20px;color:#303133">CSS</div>
<div class="t" style="left:1767px;top:159px;font-size:14px;line-height:20px;color:#303133">数据源</div>
<div class="t" style="left:1861px;top:159px;font-size:14px;line-height:20px;color:#303133">定义</div>

<div class="sh" style="top:184px"></div><div class="sl" style="top:189px">状态数据</div><svg style="left:1899px;top:192px" width="11" height="11"><use href="#plus" width="11" height="11"/></svg>
<div class="it" style="top:222px">activeTab</div><svg style="left:1861px;top:228px" width="15" height="15"><use href="#pen" width="15" height="15"/></svg><svg style="left:1888px;top:229px" width="13" height="13"><use href="#bin" width="13" height="13"/></svg>
<div class="it" style="top:254px">tableData</div><svg style="left:1861px;top:260px" width="15" height="15"><use href="#pen" width="15" height="15"/></svg><svg style="left:1888px;top:261px" width="13" height="13"><use href="#bin" width="13" height="13"/></svg>

<div class="sh" style="top:296px"></div><div class="sl" style="top:301px">计算属性</div><svg style="left:1899px;top:304px" width="11" height="11"><use href="#plus" width="11" height="11"/></svg>
<svg style="left:1724px;top:347px" width="40" height="40"><use href="#empty" width="40" height="40"/></svg>
<div class="em" style="top:398px">暂无数据</div>

<div class="sh" style="top:438px"></div><div class="sl" style="top:443px">组件方法</div><svg style="left:1899px;top:446px" width="11" height="11"><use href="#plus" width="11" height="11"/></svg>
<div class="it" style="top:476px">createMakeupForm</div><svg style="left:1861px;top:482px" width="15" height="15"><use href="#pen" width="15" height="15"/></svg><svg style="left:1888px;top:483px" width="13" height="13"><use href="#bin" width="13" height="13"/></svg>
<div class="it" style="top:508px">showHolidayCalendar</div><svg style="left:1861px;top:514px" width="15" height="15"><use href="#pen" width="15" height="15"/></svg><svg style="left:1888px;top:515px" width="13" height="13"><use href="#bin" width="13" height="13"/></svg>

<div class="sh" style="top:550px"></div><div class="sl" style="top:555px">生命周期</div><svg style="left:1899px;top:558px" width="11" height="11"><use href="#plus" width="11" height="11"/></svg>
<svg style="left:1724px;top:600px" width="40" height="40"><use href="#empty" width="40" height="40"/></svg>
<div class="em" style="top:651px">暂无数据</div>

<div class="sh" style="top:691px"></div><div class="sl" style="top:696px">侦听器</div><svg style="left:1899px;top:699px" width="11" height="11"><use href="#plus" width="11" height="11"/></svg>
<svg style="left:1724px;top:742px" width="40" height="40"><use href="#empty" width="40" height="40"/></svg>
<div class="em" style="top:793px">暂无数据</div>

<!-- status bar -->
<div class="a" style="left:0;top:1034px;width:1920px;height:21px;background:#fff;border-top:1px solid #e4e7ed"></div>
<div class="t" style="left:20px;top:1036px;font-size:12px;line-height:18px;color:#444">ItServer</div>
<div class="a" style="left:0;top:1047px;width:8px;height:8px;background:radial-gradient(circle at 100% 0,transparent 7.5px,#2c3a33 8px)"></div>
<div class="a" style="left:1912px;top:1047px;width:8px;height:8px;background:radial-gradient(circle at 0 0,transparent 7.5px,#2c3a33 8px)"></div>
</body></html>
